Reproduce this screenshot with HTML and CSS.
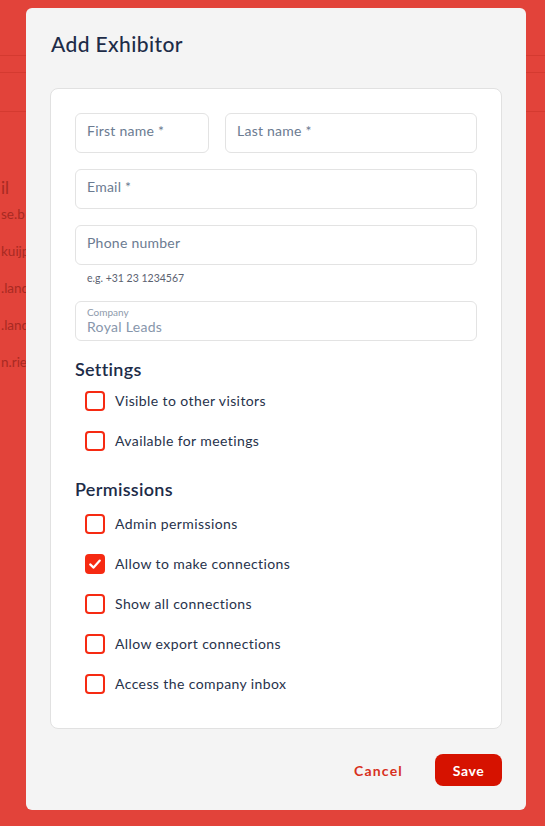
FILE: index.html
```html
<!DOCTYPE html>
<html lang="en">
<head>
<meta charset="utf-8">
<title>Add Exhibitor</title>
<link rel="stylesheet" href="styles.css">
</head>
<body>
<div class="backdrop">
  <div class="bg-lines">
    <div class="bg-line l1"></div>
    <div class="bg-line l2"></div>
    <div class="bg-line l3"></div>
  </div>
  <div class="bg-col">
    <div class="bg-head">il</div>
    <div class="bg-cell">se.b</div>
    <div class="bg-cell">kuijp</div>
    <div class="bg-cell">.land</div>
    <div class="bg-cell">.land</div>
    <div class="bg-cell">n.rie</div>
  </div>
</div>

<div class="modal">
  <h1 class="modal-title">Add Exhibitor</h1>
  <div class="card">
    <div class="row">
      <div class="field first"><span class="ph">First name *</span></div>
      <div class="field grow"><span class="ph">Last name *</span></div>
    </div>
    <div class="field"><span class="ph">Email *</span></div>
    <div class="field"><span class="ph">Phone number</span></div>
    <div class="helper">e.g. +31 23 1234567</div>
    <div class="field company">
      <span class="small-label">Company</span>
      <span class="value">Royal Leads</span>
    </div>

    <h2 class="section">Settings</h2>
    <div class="checks">
      <div class="check"><span class="box"></span><span class="label">Visible to other visitors</span></div>
      <div class="check"><span class="box"></span><span class="label">Available for meetings</span></div>
    </div>

    <h2 class="section">Permissions</h2>
    <div class="checks perms">
      <div class="check"><span class="box"></span><span class="label">Admin permissions</span></div>
      <div class="check"><span class="box checked"><svg viewBox="0 0 20 20" width="20" height="20"><path d="M5.2 10.4 L8.6 13.6 L14.8 6.6" fill="none" stroke="#fff" stroke-width="2.2" stroke-linecap="round" stroke-linejoin="round"/></svg></span><span class="label">Allow to make connections</span></div>
      <div class="check"><span class="box"></span><span class="label">Show all connections</span></div>
      <div class="check"><span class="box"></span><span class="label">Allow export connections</span></div>
      <div class="check"><span class="box"></span><span class="label">Access the company inbox</span></div>
    </div>
  </div>
  <div class="footer">
    <button class="btn-cancel">Cancel</button>
    <button class="btn-save">Save</button>
  </div>
</div>
</body>
</html>
```

FILE: styles.css
```css
* { box-sizing: border-box; }
html, body { margin: 0; padding: 0; }
body {
  width: 545px;
  height: 826px;
  overflow: hidden;
  background: #e2433a;
  font-family: "Lato", "Noto Sans", sans-serif;
  position: relative;
}
.backdrop {
  position: absolute;
  inset: 0;
}
.bg-line {
  position: absolute;
  left: 0;
  right: 0;
  height: 1px;
  background: rgba(170, 30, 20, 0.25);
}
.l1 { top: 55px; }
.l2 { top: 72px; }
.l3 { top: 111px; }
.bg-col {
  position: absolute;
  left: 1px;
  top: 176px;
  color: #a82a22;
  white-space: nowrap;
}
.bg-head {
  font-size: 17px;
  height: 24px;
  line-height: 24px;
  margin-bottom: 3px;
}
.bg-cell {
  font-size: 13.5px;
  height: 37px;
  line-height: 22px;
}

.modal {
  position: absolute;
  left: 26px;
  top: 8px;
  width: 500px;
  height: 802px;
  background: #f4f4f4;
  border-radius: 6px;
  padding: 22px 24px 24px 24px;
  display: flex;
  flex-direction: column;
}
.modal-title {
  margin: 0 0 0 1px;
  font-size: 21px;
  line-height: 28px;
  font-weight: 500;
  letter-spacing: 0.4px;
  color: #1d2c48;
  height: 58px;
}
.card {
  background: #fff;
  border: 1px solid #e1e1e1;
  border-radius: 8px;
  padding: 24px;
  display: flex;
  flex-direction: column;
}
.row {
  display: flex;
  gap: 16px;
  margin-bottom: 16px;
}
.field {
  height: 40px;
  border: 1px solid #e3e3e3;
  border-radius: 6px;
  padding: 0 12px 5px 11px;
  display: flex;
  align-items: center;
  margin-bottom: 16px;
  background: #fff;
}
.row .field { margin-bottom: 0; }
.field.first { width: 134px; }
.field.grow { flex: 1; }
.ph {
  font-size: 14px;
  letter-spacing: 0.25px;
  color: #6b7b91;
}
.helper {
  font-size: 10.5px;
  color: #5b6270;
  line-height: 16px;
  margin: -11px 0 15px 12px;
}
.company {
  flex-direction: column;
  align-items: flex-start;
  justify-content: center;
  margin-bottom: 0;
  padding-bottom: 0;
}
.small-label {
  font-size: 10px;
  line-height: 11px;
  color: #8e9aab;
  margin-top: -1px;
}
.value {
  font-size: 14px;
  letter-spacing: 0.3px;
  line-height: 17px;
  color: #8796ab;
}
.section {
  margin: 16px 0 0;
  font-size: 18px;
  line-height: 24px;
  font-weight: 600;
  letter-spacing: 0.3px;
  color: #1d2c48;
}
.checks { display: flex; flex-direction: column; }
.checks.perms { margin-top: 3px; }
.check {
  height: 40px;
  display: flex;
  align-items: center;
  padding-left: 10px;
  gap: 10px;
}
.box {
  width: 20px;
  height: 20px;
  border: 2px solid #f62a12;
  border-radius: 4px;
  flex: none;
  display: flex;
  align-items: center;
  justify-content: center;
}
.box.checked {
  background: #f62a12;
}
.box.checked svg { flex: none; }
.label {
  font-size: 14px;
  color: #27324b;
  letter-spacing: 0.4px;
  margin-top: -1px;
}
.footer {
  margin-top: auto;
  display: flex;
  justify-content: flex-end;
  align-items: center;
  gap: 16px;
}
.btn-cancel {
  border: none;
  background: transparent;
  color: #d8301e;
  font-family: inherit;
  font-size: 14px;
  font-weight: 700;
  letter-spacing: 1.2px;
  padding: 0 16px;
  height: 32px;
}
.btn-save {
  border: none;
  background: #d61200;
  color: #fff;
  font-family: inherit;
  font-size: 14px;
  font-weight: 700;
  letter-spacing: 0.6px;
  height: 32px;
  width: 67px;
  border-radius: 8px;
}
```
